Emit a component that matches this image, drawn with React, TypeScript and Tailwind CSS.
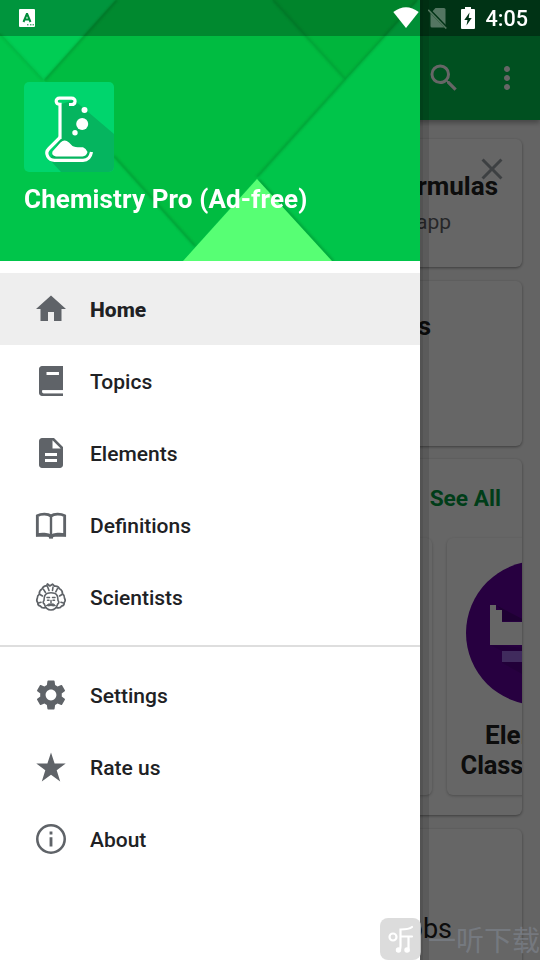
import React from 'react';
import { MdHome, MdDescription, MdSettings, MdSearch, MdMoreVert, MdClose } from 'react-icons/md';

interface MenuItem {
  label: string;
  icon: React.ReactNode;
  active?: boolean;
}

function BookIcon() {
  return (
    <svg viewBox="0 0 24 24" className="h-9 w-9" fill="currentColor">
      <path
        fillRule="evenodd"
        d="M6 2h14v16.1H6.9c-.5 0-.8.3-.8.8 0 .8.3 1.2.9 1.2h13V22H6c-1.1 0-2-.9-2-2V4c0-1.1.9-2 2-2zm3 4v2h8.3V6H9z"
      />
      <path d="M6.2 18.1H20v2H7c-.5 0-.8-.3-.8-.9z" fill="#fff" />
    </svg>
  );
}

function OpenBookIcon() {
  return (
    <svg viewBox="0 0 24 24" className="h-9 w-9" fill="none" stroke="currentColor">
      <path
        d="M12 6C10 4.500 5.600 4.300 2.900 5.900V18.500C5.600 17.900 10 18 12 19.300C14 18 18.400 17.900 21.100 18.500V5.900C18.400 4.300 14 4.500 12 6z"
        strokeWidth="1.900"
      />
      <path d="M12 6v14" strokeWidth="1.600" />
      <path d="M2 19.200h7.500q1.200.1 1.700.8h1.600q.5-.7 1.700-.8H22" strokeWidth="1.200" />
      <path d="M10.700 20.500h2.600" strokeWidth="1.200" />
    </svg>
  );
}

function ScientistIcon() {
  return (
    <svg viewBox="0 0 36 36" className="h-9 w-9" fill="none" stroke="currentColor" strokeLinejoin="round" strokeLinecap="round">
      <path
        d="M12.500 28.700Q8.500 29.500 7.500 27.200Q4.500 26.500 4.800 23.800Q3 21.500 4.300 19.200Q4.300 16.500 6.300 15.200Q6 11.500 9 10Q10.500 6.500 13.500 7L14.500 5L16.800 7L19.500 5.200L21.500 7.200Q25 6.500 26.500 9.800Q29.500 11 29.500 14.800Q31.800 16.500 31.500 19.300Q33 21.500 31.200 23.800Q31.500 26.500 28.500 27.200Q27.500 29.500 23.500 28.700"
        strokeWidth="1.700"
      />
      <path d="M11 21.500Q11 15.300 14.500 14.300Q18 13.200 21.500 14.300Q25 15.300 25 21.500Q26.800 23.500 24.700 25Q23 31 18 31Q13 31 11.300 25Q9.200 23.500 11 21.500z" strokeWidth="1.600" />
      <path d="M10.500 10.300L12.500 13.500M14.500 7.500L16 11.500M20 8L19.500 11.500M24.500 9.500L22.800 12.800M7 15.500L9.500 17M29 15.500L26.500 17M5.500 24L8 23.200M30.500 24L28 23.200" strokeWidth="1.600" />
      <path d="M14 18.500h2.500M19.500 18.500H22M14.500 21.300h1.500M20 21.300h1.500M18 21.500V24" strokeWidth="1.500" />
      <path d="M13.500 26.500Q15.500 24 18 25Q20.500 24 22.500 26.500Q20.500 27.500 18 26.500Q15.500 27.500 13.500 26.500z" fill="currentColor" strokeWidth=".9" />
    </svg>
  );
}

function StarIcon() {
  return (
    <svg viewBox="0 0 36 36" className="h-9 w-9" fill="currentColor">
      <path d="M18 3.500l3.600 11h11.100l-9 6.700 3.500 11.400L18 25.700l-9.200 6.900 3.500-11.400-9-6.700h11.100z" />
    </svg>
  );
}

function InfoIcon() {
  return (
    <svg viewBox="0 0 24 24" className="h-9 w-9" fill="none" stroke="currentColor">
      <circle cx="12" cy="12" r="9.150" strokeWidth="1.700" />
      <path d="M12 10.800v6.200M12 7v2" strokeWidth="1.900" />
    </svg>
  );
}

const mainItems: MenuItem[] = [
  { label: 'Home', icon: <MdHome className="h-9 w-9" />, active: true },
  { label: 'Topics', icon: <BookIcon /> },
  { label: 'Elements', icon: <MdDescription className="h-9 w-9" /> },
  { label: 'Definitions', icon: <OpenBookIcon /> },
  { label: 'Scientists', icon: <ScientistIcon /> },
];

const otherItems: MenuItem[] = [
  { label: 'Settings', icon: <MdSettings className="h-9 w-9" /> },
  { label: 'Rate us', icon: <StarIcon /> },
  { label: 'About', icon: <InfoIcon /> },
];

function MenuRow({ label, icon, active }: MenuItem) {
  return (
    <li className={`flex h-[72px] items-center gap-[21px] px-[33px] text-[#5f6368] ${active ? 'bg-[#eeeeee]' : ''}`}>
      {icon}
      <span className={`pt-[2px] text-[21px] leading-6 text-[#202124] ${active ? 'font-extrabold' : 'font-medium'}`}>{label}</span>
    </li>
  );
}

function AppLogo() {
  return (
    <svg viewBox="0 0 90 90" className="h-[90px] w-[90px] rounded-[5px] bg-[#00d56d]">
      <path d="M50 18L90 52V90H37L26 78L36 56V22.500z" fill="#05b55f" />
      <g fill="none" stroke="#fff" strokeWidth="3.200">
        <path d="M36 57V22.300C31 22.300 31 16.200 35.500 16.200H47.500C52.500 16.200 52 22.500 47.500 22.500H45" />
        <path d="M36 55.500L25 66.500C20 71.500 24.500 78.300 30.500 78.300H59C64 78.300 66.500 75.500 67.500 70" />
      </g>
      <path d="M28.500 69.500L36.500 60.500Q40.500 56.500 45 60.500L48.500 64Q51 65.500 59 65.200Q62 66.500 63.500 70Q62.500 74 58.500 74.500H32Q27 73.500 28.500 69.500z" fill="#fff" />
      <g fill="#fff">
        <circle cx="60.500" cy="28" r="3" />
        <circle cx="58.200" cy="42" r="6" />
        <circle cx="51" cy="50.700" r="2.700" />
      </g>
    </svg>
  );
}

function HeaderArt() {
  return (
    <svg viewBox="0 0 420 261" className="absolute inset-0 h-full w-full">
      <defs>
        <filter id="edge" x="-10%" y="-10%" width="120%" height="120%">
          <feGaussianBlur stdDeviation="1.300" />
        </filter>
      </defs>
      <rect width="420" height="261" fill="#00c54a" />
      <path d="M0 0H116L44 80L0 33z" fill="#00cd54" />
      <path d="M116 0H272L345 80L195 247L44 80z" fill="#00bc41" />
      <path d="M272 0H418L345 80z" fill="#00b53c" />
      <g fill="none" stroke="#009634" strokeWidth="2.600" filter="url(#edge)" opacity=".65">
        <path d="M0 34L43 80" opacity=".4" />
        <path d="M117 0L45 80" />
        <path d="M114 156L195 246" />
        <path d="M273 0L345 79" opacity=".8" />
        <path d="M417 0L257 177" />
        <path d="M259 180L333 261" />
      </g>
      <path d="M257 179L332 261H183z" fill="#57ff74" />
    </svg>
  );
}

function StatusBar() {
  return (
    <div className="absolute inset-x-0 top-0 z-30 flex h-9 items-center justify-between bg-black/27 pr-3 pl-[19px]">
      <svg viewBox="0 0 16 18" className="h-[18px] w-4">
        <rect width="16" height="18" rx="1" fill="#fff" />
        <path d="M4.500 13L7.800 5h.4l3.300 8M6 10.500h4" fill="none" stroke="#008c3a" strokeWidth="2" />
        <path d="M8 15.800h1.500M11 15.800h1.500M13.500 15.800H15" stroke="#008c3a" strokeWidth="1" />
      </svg>
      <div className="flex items-center">
        <svg viewBox="0 0 26 22" className="mr-[9px] h-[22px] w-[26px]" fill="#fff">
          <path d="M.3 5Q13-4.600 25.700 5L13 21z" />
        </svg>
        <svg viewBox="0 0 20 22" className="mr-[13px] h-[22px] w-5">
          <path d="M7.500 1H16q1.500 0 1.500 1.500V19q0 1.500-1.500 1.500H4Q2.500 20.500 2.500 19V6.500z" fill="#fff" opacity=".33" />
          <path d="M.7 2.200L18.800 21" stroke="#003316" strokeWidth="3" />
          <path d="M.2 2.700L18.300 21.500" stroke="#53775f" strokeWidth="1.600" />
        </svg>
        <svg viewBox="0 0 14 22" className="mr-[10px] h-[22px] w-[14px]">
          <path d="M4 0h6v2h3q1 0 1 1v18q0 1-1 1H1q-1 0-1-1V3q0-1 1-1h3z" fill="#fff" />
          <path d="M8.500 5.500L3.300 13H6.500L5.500 18.500L10.700 11H7.700z" fill="#003316" />
        </svg>
        <span className="pt-[2px] text-[21.600px] leading-[34px] font-medium text-white">4:05</span>
      </div>
    </div>
  );
}

function HomePage() {
  return (
    <div className="flex h-full flex-col bg-[#fafafa] text-[#212121]">
      <div className="h-9 shrink-0 bg-[#00b24c]" />
      <header className="z-10 flex h-[84px] shrink-0 items-center justify-end gap-[27px] bg-[#00c852] pr-[15px] text-white shadow-[0_3px_5px_rgba(0,0,0,0.3)]">
        <MdSearch className="h-9 w-9" />
        <MdMoreVert className="h-9 w-9" />
      </header>
      <main className="flex flex-col gap-[13px] pt-[19px] pr-[18px] pl-[18px]">
        <section className="relative h-[128px] rounded-md bg-white pt-[31px] pr-6 text-right shadow-[0_1px_3px_rgba(0,0,0,0.4)]">
          <MdClose className="absolute top-3 right-3 h-9 w-9 text-[#9aa0a6]" />
          <h2 className="relative text-[26px] leading-8 font-bold">Formulas</h2>
          <p className="pt-[6px] pr-[47px] text-[21px] leading-7 text-[#5f6368]">app</p>
        </section>
        <section className="mt-px h-[165px] rounded-md bg-white pt-[29px] pr-[91px] text-right shadow-[0_1px_3px_rgba(0,0,0,0.4)]">
          <h2 className="text-[26px] leading-8 font-bold">s</h2>
        </section>
        <section className="flex h-[356px] flex-col overflow-hidden rounded-md bg-white shadow-[0_1px_3px_rgba(0,0,0,0.4)]">
          <div className="pt-6 pr-[21px] text-right text-[22.700px] leading-8 font-bold text-[#009a40]">See All</div>
          <div className="flex gap-[15px] pt-[23px] pl-[232px]">
            <div className="h-[257px] w-[182px] shrink-0 rounded-md bg-white shadow-[0_1px_3px_rgba(0,0,0,0.25)]" />
            <div className="flex h-[257px] w-[182px] shrink-0 flex-col items-center rounded-md bg-white pt-[23px] shadow-[0_1px_3px_rgba(0,0,0,0.25)]">
              <svg viewBox="0 0 144 144" className="h-36 w-36 shrink-0">
                <circle cx="72" cy="72" r="72" fill="#6200a0" />
                <path d="M30 44L60 60H36V50z" fill="#4c0080" />
                <path d="M24 84L36 90V102L80 126L100 90z" fill="#560090" />
                <path d="M24 44h6v5h6v12h70v23H24z" fill="#fff" />
                <path d="M36 90h70v11H36z" fill="#b388ff" opacity=".8" />
              </svg>
              <p className="pt-[15px] text-center text-[25.500px] leading-[30px] font-bold tracking-[-0.15px]">
                <span className="pl-[3px] text-[26px] tracking-normal">Elements</span>
                <br />
                Classification
              </p>
            </div>
          </div>
        </section>
        <section className="mt-px h-[170px] rounded-md bg-white pt-[84px] pr-[70px] text-right text-[27px] leading-8 shadow-[0_1px_3px_rgba(0,0,0,0.4)]">
          Jobs
        </section>
      </main>
    </div>
  );
}

function Drawer() {
  return (
    <nav className="absolute inset-y-0 left-0 z-20 flex w-[420px] flex-col bg-white">
      <div className="relative h-[261px] shrink-0">
        <HeaderArt />
        <div className="relative flex flex-col items-start pt-[82px] pl-6">
          <AppLogo />
          <h1 className="pt-[11px] text-[26px] leading-8 font-bold tracking-[0.12px] text-white">Chemistry Pro (Ad-free)</h1>
        </div>
      </div>
      <ul className="pt-3">
        {mainItems.map((item) => (
          <MenuRow key={item.label} {...item} />
        ))}
      </ul>
      <hr className="mt-3 mb-3 border-t-2 border-[#dedede]" />
      <ul>
        {otherItems.map((item) => (
          <MenuRow key={item.label} {...item} />
        ))}
      </ul>
      {/* edge shadow that falls on the page */}
      <div className="absolute inset-y-0 left-full flex">
        <div className="w-[3px] bg-black/18" />
        <div className="w-[6px] bg-black/10" />
      </div>
    </nav>
  );
}

function Watermark() {
  return (
    <div className="absolute right-0 bottom-0 z-40 flex items-center">
      <div className="flex h-[42px] w-[41px] items-center justify-center rounded-lg bg-[#d3d3d3]/80">
        <svg viewBox="0 0 41 42" className="h-[42px] w-[41px]" fill="none" stroke="#fff" strokeWidth="2.200" strokeLinecap="round">
          <circle cx="13" cy="19" r="3.500" />
          <path d="M32 9Q29 11.500 20.500 11.500V28Q20.500 33 17.500 33M20.500 18.500H32M28.500 18.500V33" />
          <circle cx="18.500" cy="32" r="1.600" fill="#fff" />
          <circle cx="27" cy="32" r="1.600" fill="#fff" />
        </svg>
      </div>
      <span className="ml-[7px] font-['Noto_Sans_CJK_SC',sans-serif] text-[28px] leading-[42px] text-[#7d828b]/70">一听下载</span>
    </div>
  );
}

export default function App() {
  return (
    <div className="relative h-[960px] w-[540px] overflow-hidden font-['Roboto',sans-serif]">
      <HomePage />
      <div className="absolute inset-0 z-10 bg-black/60" />
      <Drawer />
      <StatusBar />
      <Watermark />
    </div>
  );
}
